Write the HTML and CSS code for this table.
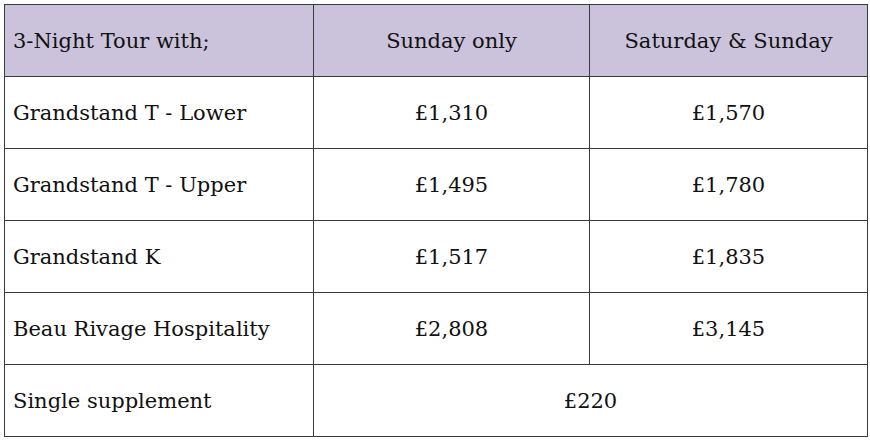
FILE: index.html
```html
<!DOCTYPE html>
<html>
<head>
<meta charset="utf-8">
<link rel="stylesheet" href="styles.css">
</head>
<body>
<table class="prices">
  <colgroup>
    <col class="c1"><col class="c2"><col class="c3">
  </colgroup>
  <tr class="head">
    <td class="label">3-Night Tour with;</td>
    <td class="val">Sunday only</td>
    <td class="val">Saturday &amp; Sunday</td>
  </tr>
  <tr>
    <td class="label">Grandstand T - Lower</td>
    <td class="val">£1,310</td>
    <td class="val">£1,570</td>
  </tr>
  <tr>
    <td class="label">Grandstand T - Upper</td>
    <td class="val">£1,495</td>
    <td class="val">£1,780</td>
  </tr>
  <tr>
    <td class="label">Grandstand K</td>
    <td class="val">£1,517</td>
    <td class="val">£1,835</td>
  </tr>
  <tr>
    <td class="label">Beau Rivage Hospitality</td>
    <td class="val">£2,808</td>
    <td class="val">£3,145</td>
  </tr>
  <tr>
    <td class="label">Single supplement</td>
    <td class="val" colspan="2">£220</td>
  </tr>
</table>
</body>
</html>
```

FILE: styles.css
```css
html, body {
  margin: 0;
  padding: 0;
  background: #ffffff;
}
body {
  padding: 4px 0 0 4px;
  font-family: "DejaVu Serif", "Liberation Serif", serif;
  color: #111111;
}
.prices {
  border-collapse: collapse;
  table-layout: fixed;
  width: 863px;
}
.c1 { width: 309px; }
.c2 { width: 276px; }
.c3 { width: 278px; }
.prices td {
  border: 1.5px solid #3a3a3a;
  height: 72px;
  padding: 0 8px;
  font-size: 21px;
  vertical-align: middle;
  box-sizing: border-box;
}
.prices .head td {
  background: #cbc3db;
}
.prices .label {
  text-align: left;
}
.prices .val {
  text-align: center;
}
```
